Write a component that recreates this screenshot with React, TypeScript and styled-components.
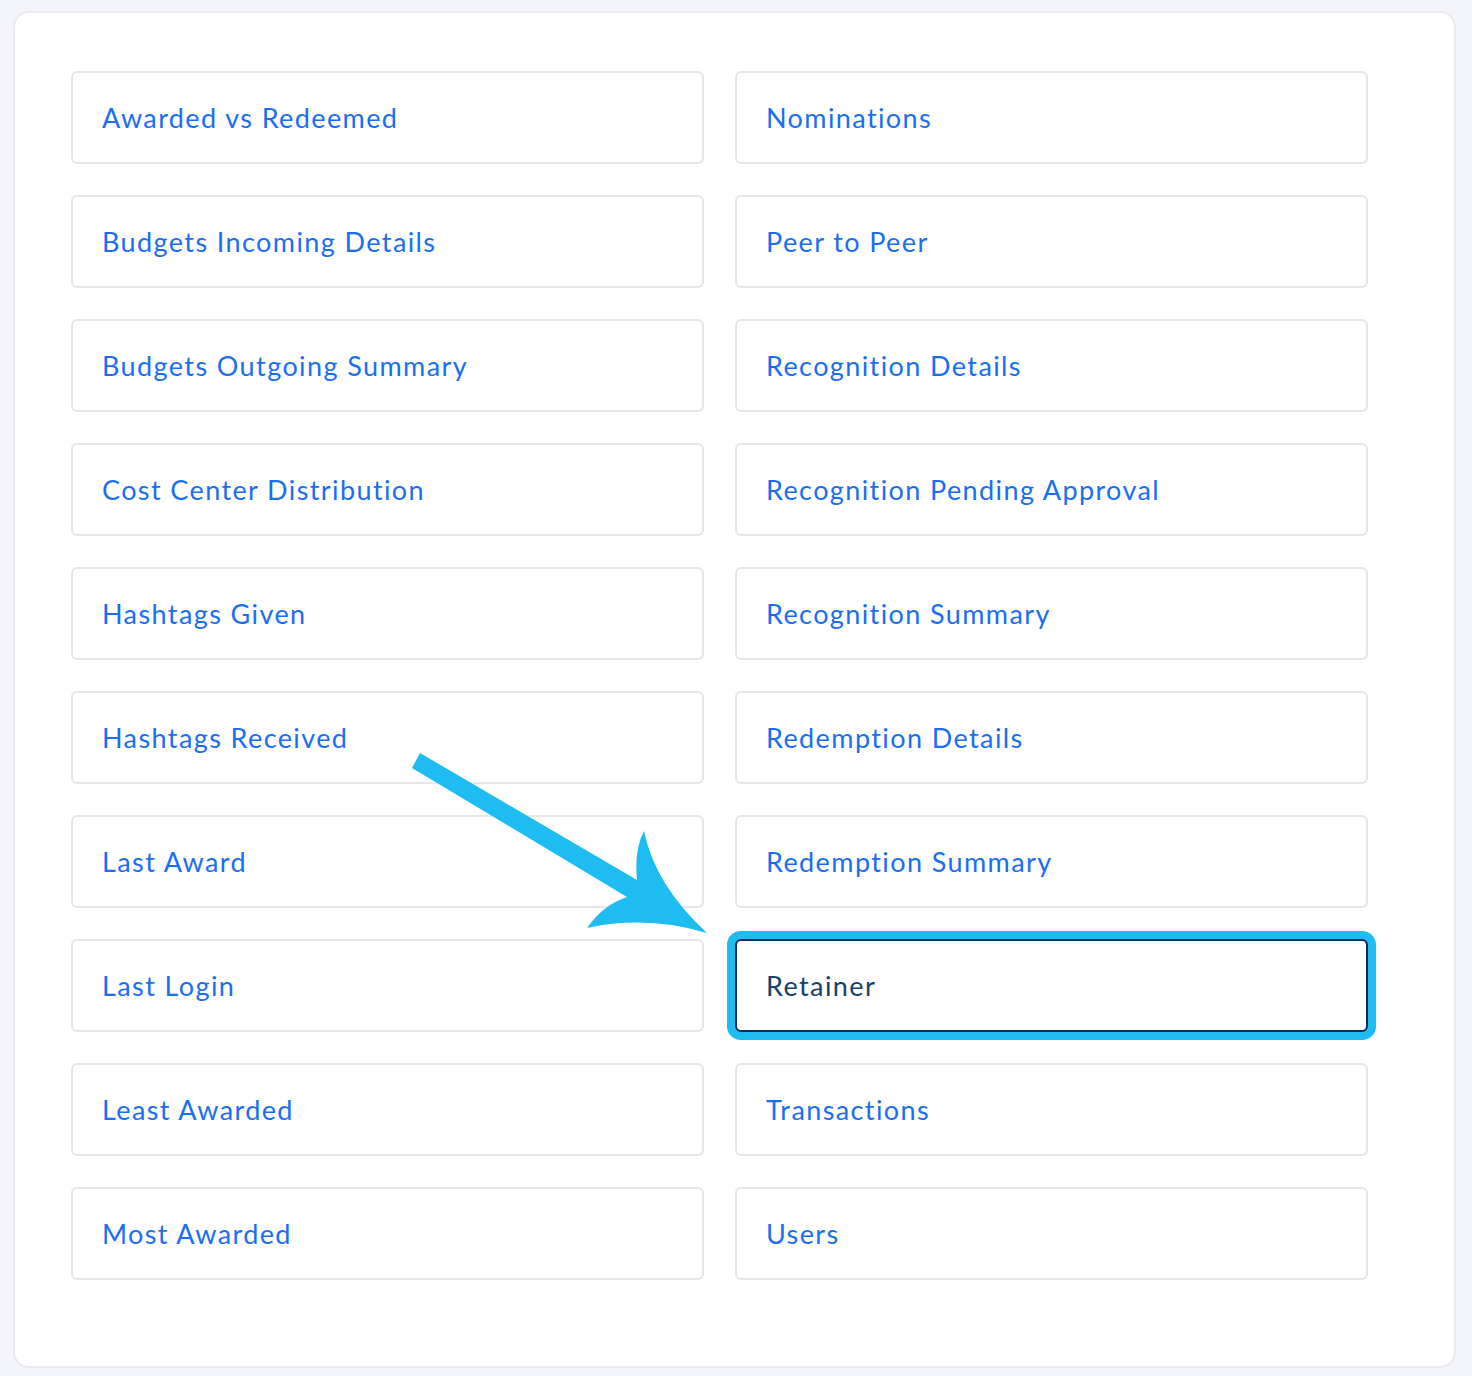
import React from "react";
import styled, { createGlobalStyle } from "styled-components";

const GlobalStyle = createGlobalStyle`
  html, body {
    margin: 0;
    padding: 0;
    background: #f4f5fa;
  }
  body {
    font-family: Lato, "Noto Sans", sans-serif;
  }
`;

const Page = styled.div`
  padding: 11px 16px 9px 13px;
  min-height: 1376px;
  box-sizing: border-box;
  position: relative;
`;

const Card = styled.div`
  width: 1443px;
  height: 1357px;
  box-sizing: border-box;
  background: #ffffff;
  border: 2px solid #e9e9ee;
  border-radius: 16px;
  padding: 58px 0 0 56px;
`;

const Grid = styled.div`
  display: grid;
  grid-template-columns: 633px 633px;
  grid-template-rows: repeat(10, 93px);
  column-gap: 31px;
  row-gap: 31px;
  grid-auto-flow: column;
`;

const Tile = styled.div<{ $active?: boolean }>`
  box-sizing: border-box;
  display: flex;
  align-items: center;
  padding-left: 29px;
  border: 2px solid ${(p) => (p.$active ? "#0b2a5c" : "#e6e6e9")};
  border-radius: 6px;
  background: #ffffff;
  font-size: 27px;
  letter-spacing: 1.4px;
  color: ${(p) => (p.$active ? "#14416f" : "#1a6ef4")};
  box-shadow: ${(p) => (p.$active ? "0 0 0 8px #1ebcf0" : "none")};
  cursor: pointer;
`;

const Arrow = styled.svg`
  position: absolute;
  left: 0;
  top: 0;
  pointer-events: none;
`;

const reports = [
  "Awarded vs Redeemed",
  "Budgets Incoming Details",
  "Budgets Outgoing Summary",
  "Cost Center Distribution",
  "Hashtags Given",
  "Hashtags Received",
  "Last Award",
  "Last Login",
  "Least Awarded",
  "Most Awarded",
  "Nominations",
  "Peer to Peer",
  "Recognition Details",
  "Recognition Pending Approval",
  "Recognition Summary",
  "Redemption Details",
  "Redemption Summary",
  "Retainer",
  "Transactions",
  "Users",
];

export default function App() {
  return (
    <Page>
      <GlobalStyle />
      <Card>
        <Grid>
          {reports.map((r) => (
            <Tile key={r} $active={r === "Retainer"}>
              {r}
            </Tile>
          ))}
        </Grid>
      </Card>
      <Arrow width="1472" height="1376" viewBox="0 0 1472 1376">
        <path
          fill="#1ebcf0"
          d="M 420 753 L 637 880 Q 634 850 644 831 Q 655 885 707 933 Q 647 915 587 928 Q 603 905 627 897 L 412 768 Z"
        />
      </Arrow>
    </Page>
  );
}
